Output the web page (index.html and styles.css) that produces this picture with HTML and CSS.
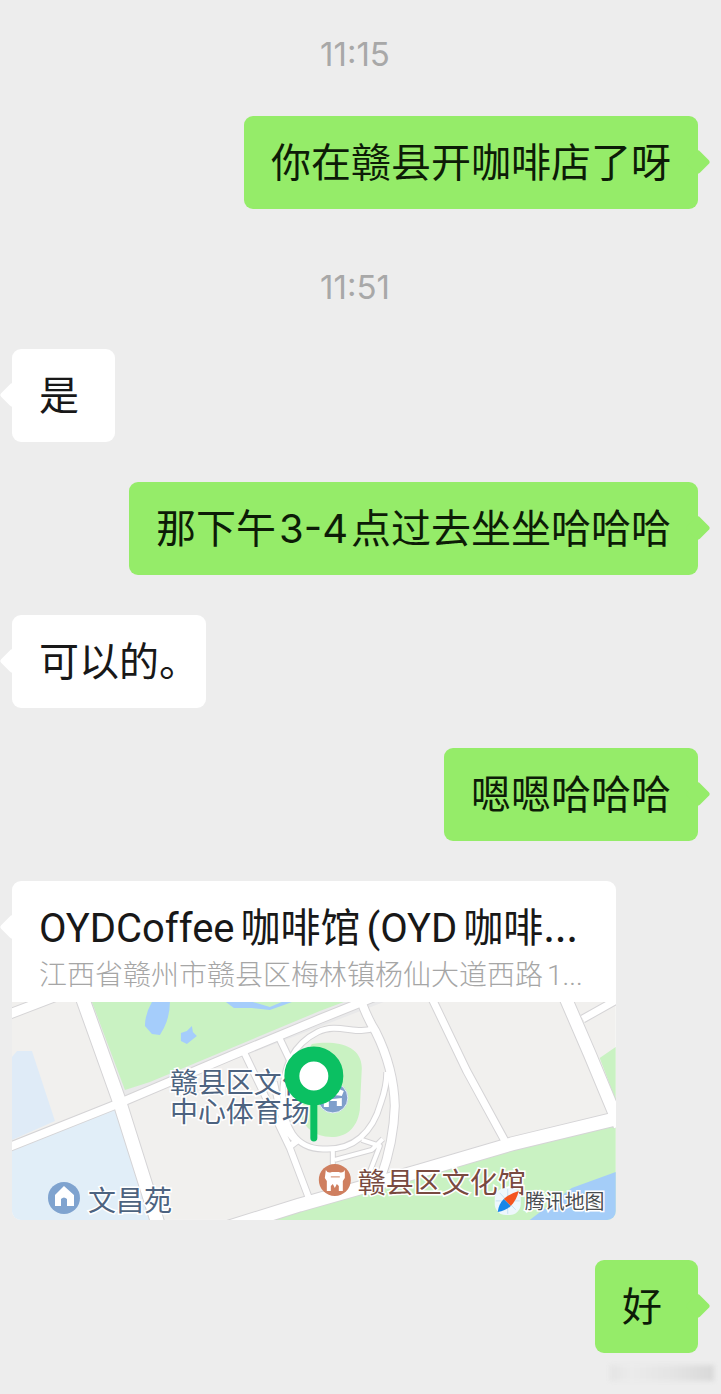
FILE: index.html
```html
<!DOCTYPE html>
<html lang="zh-CN">
<head>
    <meta charset="UTF-8">
    <meta name="viewport" content="width=device-width, initial-scale=1.0">
    <title>聊天</title>
    <link rel="stylesheet" href="styles.css">
</head>
<body>
    <main class="chat">
        <time class="time">11:15</time>
        <div class="bubble mine">你在赣县开咖啡店了呀</div>
        <time class="time">11:51</time>
        <div class="bubble">是</div>
        <div class="bubble mine">那下午<span class="num">3-4</span>点过去坐坐哈哈哈</div>
        <div class="bubble">可以的。</div>
        <div class="bubble mine">嗯嗯哈哈哈</div>

        <div class="location">
            <div class="location-info">
                <div class="location-name">OYDCoffee<span class="gap">咖啡馆</span>(OYD<span class="gap">咖啡</span><span class="dots">…</span></div>
                <div class="location-address">江西省赣州市赣县区梅林镇杨仙大道西路<span class="house">1...</span></div>
            </div>
            <svg class="map" viewBox="0 0 604 218">
                <rect width="604" height="218" fill="#f1f0ee"/>
                <!-- районы, парк и вода -->
                <path fill="#e9e9ea" d="M78 0H372L113 100z"/>
                <path fill="#c9f2c2" d="M80 0H332L308 9 138 80 113 88z"/>
                <path fill="#a5cdfb" d="M140 0H158Q158 14 152 26L148 33 140 32 133 24Q133 12 140 0zM169 31L175 29 180 24 181 30 185 34 175 42 169 39zM214 0L222 6 240 6 258 8 272 3 280 0H270L258 5 241 0z"/>
                <path fill="#dfebf7" d="M0 55L5 49H20L43 119 0 138z"/>
                <path fill="#e1eef8" d="M0 146L104 105 142 218H0z"/>
                <path fill="#c9f2c2" d="M235 222L500 144 604 118V218zM588 56L604 45V98z"/>
                <path fill="#a4cdf8" d="M604 170L560 186 518 218H604z"/>
                <!-- дороги: сначала контур, потом белая заливка -->
                <g class="road-edge">
                    <path stroke-width="15" d="M69 -8L108 101 148 228"/>
                    <path stroke-width="10" d="M-5 146L108 101 221 53 308 17 380 -12"/>
                    <path stroke-width="11" d="M-5 13L50 -8"/>
                    <path stroke-width="8" d="M232 50L278 146 300 204M267 35L278 58M262 80L268 108Q274 132 285 139L276 146"/>
                    <path stroke-width="15" d="M205 229L288 203 408 169 500 142 612 115"/>
                    <path stroke-width="9" d="M419 -6L455 69 497 146M571 17L612 -6"/>
                    <path stroke-width="14" d="M553 -6L578 52 608 124"/>
                    <path stroke-width="10" d="M347 -8Q354 14 364 30Q382 66 383 104Q382 140 369 176"/>
                    <path stroke-width="7" d="M362 26C345 34 326 20 306 30C282 42 270 65 271 96C272 124 283 147 311 147C342 149 361 130 369 101Q375 84 375 70"/>
                    <path stroke-width="6" d="M321 148V164M323 158L360 148 371 137M358 170L368 144 350 138"/>
                </g>
                <g class="road">
                    <path stroke-width="13" d="M69 -8L108 101 148 228"/>
                    <path stroke-width="8" d="M-5 146L108 101 221 53 308 17 380 -12"/>
                    <path stroke-width="9" d="M-5 13L50 -8"/>
                    <path stroke-width="6" d="M232 50L278 146 300 204M267 35L278 58M262 80L268 108Q274 132 285 139L276 146"/>
                    <path stroke-width="13" d="M205 229L288 203 408 169 500 142 612 115"/>
                    <path stroke-width="7" d="M419 -6L455 69 497 146M571 17L612 -6"/>
                    <path stroke-width="12" d="M553 -6L578 52 608 124"/>
                    <path stroke-width="8" d="M347 -8Q354 14 364 30Q382 66 383 104Q382 140 369 176"/>
                    <path stroke-width="5" d="M362 26C345 34 326 20 306 30C282 42 270 65 271 96C272 124 283 147 311 147C342 149 361 130 369 101Q375 84 375 70"/>
                    <path stroke-width="4" d="M321 148V164M323 158L360 148 371 137M358 170L368 144 350 138"/>
                </g>
                <path fill="#c9f2c2" d="M300 42C322 38 350 42 350 66L348 108C345 128 333 135 320 135C302 135 288 124 288 104L286 66z"/>

                <!-- стадион -->
                <circle cx="321" cy="96" r="15" fill="#7f9fcb" stroke="#e3ecf7"/>
                <path fill="#fff" d="M310 91Q321 84 332 89L330 94Q321 92 312 96zM312 98L330 96V104H325V99H317V105H312z"/>
                <text class="label"><tspan x="158" y="91">赣县区文化</tspan><tspan x="158" y="120">中心体育场</tspan></text>
                <!-- жилой дом -->
                <circle cx="52" cy="196" r="16" fill="#7fa3cf"/>
                <path fill="#fff" d="M52 184L62 193V204H55V197Q52 194 49 197V204H43V193z"/>
                <text class="label" x="76" y="209">文昌苑</text>
                <!-- дом культуры -->
                <circle cx="323" cy="178" r="16" fill="#cf7f5f"/>
                <path fill="#fff" d="M314 168Q316 172 320 170H327Q331 172 333 168V176L331 179V189H327V184L325 182 323 186 321 182 319 184V189H315V179L313 176z"/>
                <path stroke="#cf7f5f" stroke-width="1" d="M319 175H328"/>
                <text class="label brown" x="346" y="191">赣县区文化馆</text>
                <!-- булавка -->
                <path stroke="#0bc062" stroke-width="7" stroke-linecap="round" d="M302 98V136"/>
                <circle cx="302" cy="74" r="22" fill="#fff" stroke="#0bc062" stroke-width="15"/>
                <!-- логотип карты -->
                <rect x="483" y="186" width="26" height="27" rx="11" fill="#eef7fc"/>
                <path stroke="#c7e2f3" fill="none" d="M496 187V212M484 199H508M488 191L504 208"/>
                <path fill="#f4551f" d="M507 189Q499 191 492 197L499 204Q505 198 507 189z"/>
                <path fill="#1787e8" d="M486 210Q487 202 492 197L499 204Q494 209 486 210z"/>
                <text class="label brand" x="513" y="207">腾讯地图</text>
            </svg>
        </div>

        <div class="bubble mine">好</div>
    </main>
    <div class="smudge"></div>
</body>
</html>
```
FILE: styles.css
```css
body {
    margin: 0;
    background-color: #ededed;
    color: #181818;
    font-family: Roboto, "Noto Sans CJK SC", sans-serif;
}
.chat {
    display: flex;
    flex-direction: column;
    align-items: flex-start;
    gap: 40px;
    padding: 16px 23px 0 12px;
}
.time {
    align-self: center;
    margin-top: 16px;
    font-family: Inter, sans-serif;
    font-size: 33px;
    line-height: 44px;
    color: #a8a8a8;
}
.bubble {
    position: relative;
    box-sizing: border-box;
    min-width: 103px;
    padding: 20px 27px 17px;
    border-radius: 9px;
    background-color: #fff;
    font-size: 40px;
    line-height: 56px;
    font-feature-settings: "halt";
}
.mine {
    align-self: flex-end;
    background-color: #95ec69;
    color: #0d1c07;
}
/* хвостик сообщения */
.bubble::before,
.location::before {
    content: "";
    position: absolute;
    top: 37px;
    left: -9px;
    width: 18px;
    height: 18px;
    border-radius: 3px;
    background-color: #fff;
    transform: rotate(45deg);
}
.mine::before {
    left: auto;
    right: -9px;
    background-color: #95ec69;
}
.num {
    margin: 0 3px;
    font-family: Inter, sans-serif;
    line-height: 1;
}
.location {
    position: relative;
    width: 88%;
    border-radius: 9px;
    background-color: #fff;
}
.location-info {
    padding: 21px 27px 7px;
    white-space: nowrap;
}
.location-name {
    font-size: 40px;
    line-height: 54px;
}
.gap {
    margin: 0 6px;
}
.dots {
    margin-left: -6px;
    font-family: Inter, sans-serif;
    line-height: 1;
}
.location-address {
    font-size: 28px;
    font-weight: 300;
    line-height: 39px;
    color: #a6a6a6;
}
.house {
    margin-left: 4px;
}
.map {
    display: block;
    width: 100%;
    border-radius: 0 0 9px 9px;
}
.road,
.road-edge {
    fill: none;
    stroke: #fff;
    stroke-linejoin: round;
}
.road-edge {
    stroke: #d5d4d6;
}
.label {
    font-size: 28px;
    fill: #4d6380;
    stroke: #fff;
    stroke-width: 3px;
    paint-order: stroke;
}
.brown {
    fill: #794a40;
}
.brand {
    font-size: 20px;
    fill: #4a4d50;
}
.smudge {
    width: 104px;
    height: 16px;
    margin: 12px 7px 12px auto;
    background: linear-gradient(90deg, #e4e4e4, #ebebeb 20%, #e4e4e4 60%, #d9d9d9);
    filter: blur(2px);
}
```
